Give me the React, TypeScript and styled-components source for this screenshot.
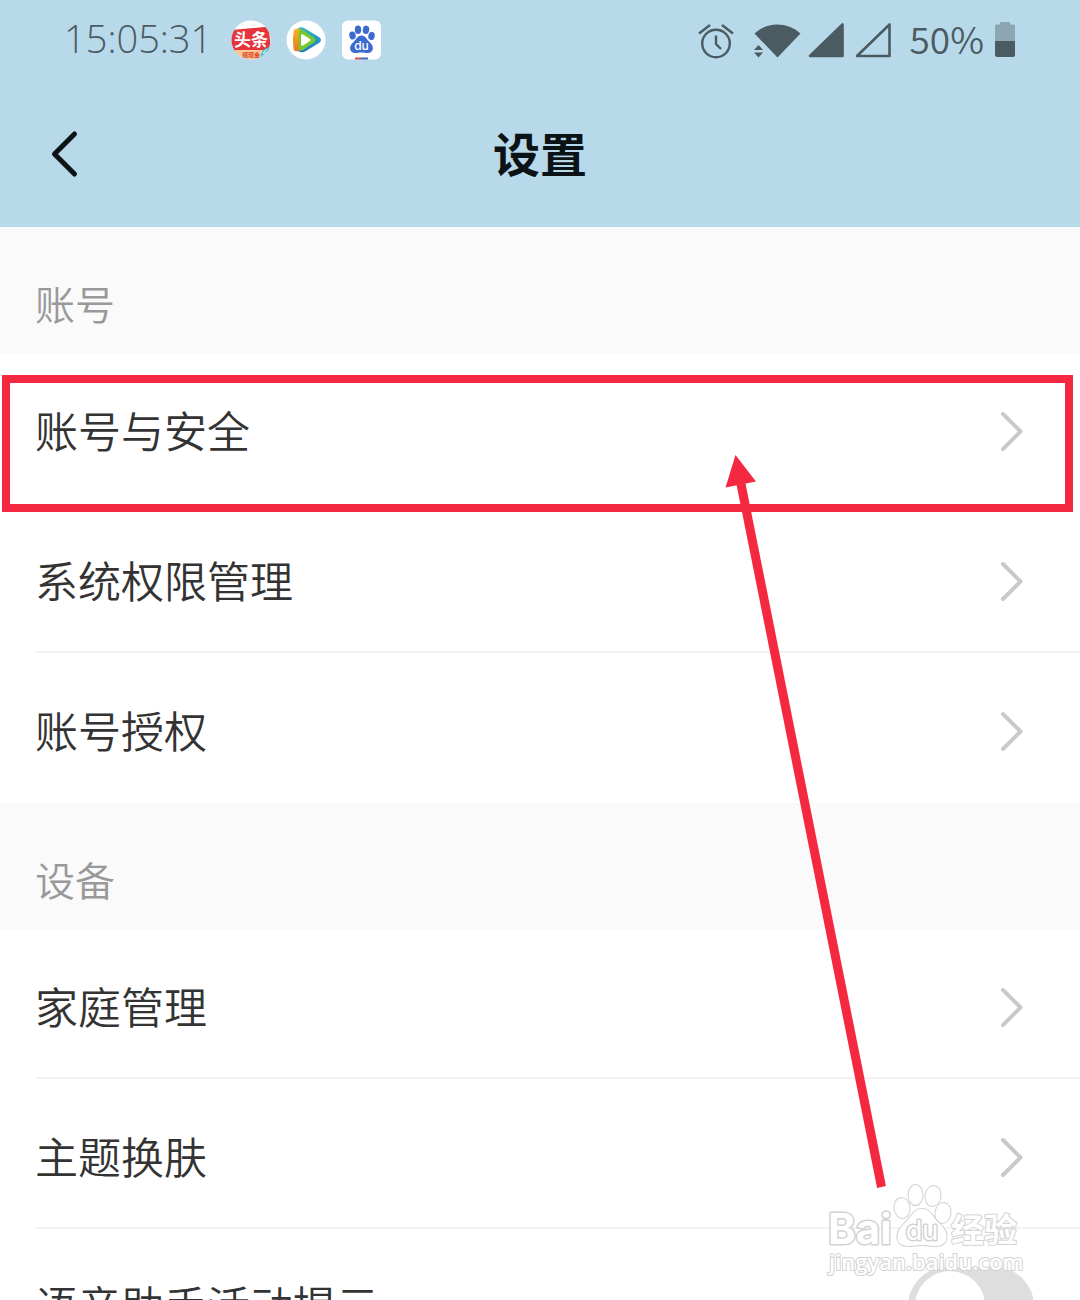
import React from 'react';
import styled, { createGlobalStyle } from 'styled-components';

const GlobalStyle = createGlobalStyle`
  *, *::before, *::after { box-sizing: border-box; }
  body {
    margin: 0;
    background: #fff;
    font-family: "Noto Sans CJK SC", "Noto Sans", sans-serif;
    color: #333;
  }
`;

const Screen = styled.div`
  position: relative;
  display: flex;
  flex-direction: column;
  height: 100vh;
  overflow: hidden;
`;

const TopArea = styled.header`
  flex: none;
  background: #b8d9e9;
`;

const StatusBar = styled.div`
  display: flex;
  align-items: center;
  justify-content: space-between;
  height: 80px;
  padding: 0 64px;
  color: #4b5b62;
`;

const StatusGroup = styled.div<{ $gap: number }>`
  display: flex;
  align-items: center;
  gap: ${(p) => p.$gap}px;
`;

const Clock = styled.time`
  font: 350 38px/48px "Open Sans", sans-serif;
  padding: 0 4px 4px 0;
`;

const Percent = styled.span`
  margin: 0 -4px 0 4px;
  padding-bottom: 4px;
  font: 350 37px/48px "Noto Sans CJK SC", sans-serif;
`;

const Icon = styled.svg`
  display: block;
  flex: none;
`;

const TitleBar = styled.div`
  display: grid;
  grid-template-columns: 80px 1fr 80px;
  align-items: center;
  height: 147px;
  padding: 0 32px 4px;
`;

const BackButton = styled.button`
  width: 64px;
  height: 64px;
  padding: 0;
  border: 0;
  background: none;
  cursor: pointer;
`;

const Title = styled.h1`
  margin: 0;
  text-align: center;
  font-size: 47px;
  line-height: 64px;
  font-weight: 700;
  color: #0b1317;
`;

const Group = styled.section`
  flex: none;
`;

const GroupTitle = styled.h2`
  margin: 0;
  height: 126px;
  padding: 46px 35px 0;
  background: #fafafa;
  color: #999;
  font-size: 40px;
  line-height: 60px;
  font-weight: 350;
`;

const List = styled.ul`
  margin: 0;
  padding: 0;
  list-style: none;
`;

const Item = styled.li`
  position: relative;
  padding-left: 35px;
`;

const rowLayout = `
  display: flex;
  align-items: center;
  justify-content: space-between;
  width: 100%;
  height: 150px;
  padding: 7px 48px 0 0;
  font-family: inherit;
  font-size: 43px;
  line-height: 64px;
  font-weight: 350;
  color: #333;
  text-align: left;
  cursor: pointer;
`;

const RowLabel = styled.span`
  padding-bottom: 4px;
`;

const RowButton = styled.button<{ $divider?: boolean }>`
  ${rowLayout}
  border: 0;
  border-bottom: 2px solid ${(p) => (p.$divider ? '#f3f3f3' : 'transparent')};
  background: none;
`;

const SwitchRow = styled.label`
  ${rowLayout}
  padding: 4px 46px 0 0;
`;

const Switch = styled.input`
  appearance: none;
  display: flex;
  align-items: center;
  width: 126px;
  height: 78px;
  margin: 0;
  padding-left: 7px;
  border-radius: 39px;
  background: #dedede;

  &::before {
    content: '';
    width: 70px;
    height: 70px;
    border-radius: 50%;
    background: #fff;
  }

  &:checked { justify-content: flex-end; padding: 0 7px 0 0; }
`;

const Highlight = styled.span`
  position: absolute;
  inset: 22px 7px -9px 2px;
  border: 8px solid #f42941;
  pointer-events: none;
`;

const Arrow = styled.svg`
  position: absolute;
  top: 450px;
  right: 190px;
  pointer-events: none;
`;

const Watermark = styled.div`
  position: absolute;
  top: 1180px;
  right: 50px;
  width: 206px;
  pointer-events: none;
`;

const BackIcon = () => (
  <Icon width="64" height="64" viewBox="0 0 64 64" fill="none" stroke="#0b1317" strokeWidth="5" strokeLinecap="round" strokeLinejoin="round">
    <path d="M42.500 14L22.500 34L42.500 54" />
  </Icon>
);

const Chevron = () => (
  <Icon width="40" height="48" viewBox="0 0 40 48" fill="none" stroke="#c9c9c9" strokeWidth="4" strokeLinecap="round" strokeLinejoin="round">
    <path d="M11 7L28.500 24.500L11 42" />
  </Icon>
);

const NewsIcon = () => (
  <Icon width="40" height="40" viewBox="0 0 40 40">
    <clipPath id="news"><circle cx="20" cy="20" r="19.500" /></clipPath>
    <g clipPath="url(#news)">
      <rect width="40" height="40" fill="#fff" />
      <path d="M0 10L34 7Q37 7 38 10L40 31H0Z" fill="#e5343b" />
      <path d="M0 30H33L29 40H0Z" fill="#fbc795" />
      <path d="M32 30L40 26V40H28Z" fill="#35c3d5" />
      <path d="M36 29l-4 4h3l-2 4" stroke="#fff" fill="none" />
      <text x="20" y="26" textAnchor="middle" fontSize="17" fontWeight="700" fill="#fff">头条</text>
      <text x="20" y="37" textAnchor="middle" fontSize="6" fontWeight="700" fill="#d8442b">领现金</text>
    </g>
  </Icon>
);

const VideoIcon = () => (
  <Icon width="40" height="40" viewBox="0 0 40 40">
    <defs>
      <linearGradient id="blue" x1="0" y1="0" x2="0" y2="1">
        <stop offset="0" stopColor="#30b8c4" /><stop offset="1" stopColor="#1976cb" />
      </linearGradient>
      <linearGradient id="orange" x1="0" y1="0" x2="0" y2="1">
        <stop offset="0" stopColor="#f7b51c" /><stop offset="1" stopColor="#e87a1d" />
      </linearGradient>
    </defs>
    <circle cx="20" cy="20" r="19.500" fill="#fff" />
    <path d="M12 8.500Q14 6.500 18 8L33 17Q37 20 33 23L19 31.500Q14 33 12 31Z" fill="url(#blue)" />
    <path d="M8 10Q10 7.500 14 9L20 12V28L12 31Q8 32 7.500 28Q6 19 8 10Z" fill="url(#orange)" />
    <path d="M13 10Q15 9 19 11.500L28 17.500Q31 20 28 22.500L17 30Q13 32 13 29Q12 19 13 10Z" fill="#73c92d" />
    <path d="M15 15.500Q15 13.500 17 14.500L24 19Q25.500 20 24 21L17 25.500Q15 26.500 15 24.500Z" fill="#fff" />
  </Icon>
);

const BaiduIcon = () => (
  <Icon width="40" height="40" viewBox="0 0 40 40">
    <rect x="1" y=".5" width="39" height="39" rx="6" fill="#fff" />
    <g fill="#3c6bd0">
      <ellipse cx="11.500" cy="15.500" rx="3.200" ry="4" transform="rotate(-12 11.500 15.500)" />
      <ellipse cx="17" cy="9.800" rx="3.200" ry="4.200" />
      <ellipse cx="25" cy="9.800" rx="3.200" ry="4.200" transform="rotate(8 25 9.800)" />
      <ellipse cx="30.500" cy="16" rx="3.200" ry="4" transform="rotate(12 30.500 16)" />
      <path d="M20.500 15.500C25 15.500 25.500 19.500 29 22.500C34 27 32 33 27 33C24 33 23 32.500 20.500 32.500C18 32.500 17 33 14 33C9 33 7 27 12 22.500C15.500 19.500 16 15.500 20.500 15.500Z" />
    </g>
    <text x="20.500" y="30" textAnchor="middle" fontFamily="Inter, sans-serif" fontSize="12" fontWeight="500" fill="#fff">du</text>
    <path d="M14 38.500H20" stroke="#d84a50" strokeWidth="2" /><path d="M20 38.500H27" stroke="#3f63c6" strokeWidth="2" />
  </Icon>
);

const AlarmIcon = () => (
  <Icon width="38" height="38" viewBox="0 0 38 38" fill="none" stroke="currentColor" strokeWidth="2.400">
    <circle cx="19" cy="22.500" r="13.800" />
    <path d="M19 14.500V23L24 28M2 12.500L13 4M25 4L36 12.500" />
  </Icon>
);

const WifiIcon = () => (
  <Icon width="48" height="38" viewBox="0 0 48 38" fill="currentColor">
    <path d="M1.500 12.500C14 .5 34 .5 47.500 12.500L24.500 36.500Z" />
    <path d="M1 29L5.500 24L10 29ZM1 31.500L5.500 36.500L10 31.500Z" />
  </Icon>
);

const SignalIcon = ({ filled }: { filled?: boolean }) => (
  <Icon width="38" height="38" viewBox="0 0 38 38" fill={filled ? 'currentColor' : 'none'} stroke="currentColor" strokeWidth="2.600" strokeLinejoin="round">
    <path d="M3 35L35.500 3.500V35Z" />
  </Icon>
);

const BatteryIcon = () => (
  <Icon width="22" height="38" viewBox="0 0 22 38" fill="currentColor">
    <path d="M1 20V5Q1 3.500 2.500 3.500H6V1H16V3.500H19.500Q21 3.500 21 5V20Z" opacity=".4" />
    <path d="M1 20H21V34Q21 36 19 36H3Q1 36 1 34Z" />
  </Icon>
);

const WatermarkLogo = () => (
  <Icon width="206" height="106" viewBox="0 0 206 106" fill="#fff" stroke="#d2d2d2" strokeWidth="3" strokeLinejoin="round" paintOrder="stroke">
    <text x="4" y="64" fontFamily="Inter, sans-serif" fontSize="42" fontWeight="700">Bai</text>
    <g strokeWidth="2">
      <ellipse cx="78" cy="28" rx="7.500" ry="10" transform="rotate(-8 78 28)" />
      <ellipse cx="91.500" cy="15" rx="7" ry="10" />
      <ellipse cx="109" cy="16" rx="7.500" ry="10" transform="rotate(10 109 16)" />
      <ellipse cx="119" cy="33" rx="7.500" ry="10" transform="rotate(10 119 33)" />
      <path d="M98 29C107 29 108 37 115 43C127 54 124 66 112 66C106 66 104 65 98 65C92 65 90 66 84 66C72 66 69 54 81 43C88 37 89 29 98 29Z" />
    </g>
    <text x="98" y="60" textAnchor="middle" fontFamily="Inter, sans-serif" fontSize="27" fontWeight="400">du</text>
    <text x="127" y="62" fontSize="33" fontWeight="700" strokeWidth="2">经验</text>
    <text x="5" y="90" fontFamily="'Open Sans', sans-serif" fontSize="22" fontWeight="600" strokeWidth="2">jingyan.baidu.com</text>
  </Icon>
);

const groups = [
  { title: '账号', rows: ['账号与安全', '系统权限管理', '账号授权'], marked: '账号与安全' },
  { title: '设备', rows: ['家庭管理', '主题换肤'], toggle: '语音助手活动提示' },
];

export default function App() {
  return (
    <>
      <GlobalStyle />
      <Screen>
        <TopArea>
          <StatusBar>
            <StatusGroup $gap={15}>
              <Clock>15:05:31</Clock>
              <NewsIcon />
              <VideoIcon />
              <BaiduIcon />
            </StatusGroup>
            <StatusGroup $gap={14}>
              <StatusGroup $gap={18}>
                <AlarmIcon />
                <StatusGroup $gap={6}>
                  <WifiIcon />
                  <StatusGroup $gap={9}>
                    <SignalIcon filled />
                    <SignalIcon />
                  </StatusGroup>
                </StatusGroup>
              </StatusGroup>
              <Percent>50%</Percent>
              <BatteryIcon />
            </StatusGroup>
          </StatusBar>
          <TitleBar>
            <BackButton aria-label="返回"><BackIcon /></BackButton>
            <Title>设置</Title>
          </TitleBar>
        </TopArea>
        <main>
          {groups.map((group) => (
            <Group key={group.title}>
              <GroupTitle>{group.title}</GroupTitle>
              <List>
                {group.rows.map((row, i) => (
                  <Item key={row}>
                    <RowButton $divider={row !== group.marked && (i < group.rows.length - 1 || !!group.toggle)}>
                      <RowLabel>{row}</RowLabel>
                      <Chevron />
                    </RowButton>
                    {row === group.marked && <Highlight />}
                  </Item>
                ))}
                {group.toggle && (
                  <Item>
                    <SwitchRow>
                      <RowLabel>{group.toggle}</RowLabel>
                      <Switch type="checkbox" role="switch" />
                    </SwitchRow>
                  </Item>
                )}
              </List>
            </Group>
          ))}
        </main>
        <Arrow width="170" height="745" viewBox="0 0 170 745">
          <path d="M21 34L161.500 737" stroke="#f42941" strokeWidth="9" />
          <path d="M15.500 5L36 31.500L5.500 37.500Z" fill="#f42941" />
        </Arrow>
        <Watermark><WatermarkLogo /></Watermark>
      </Screen>
    </>
  );
}
